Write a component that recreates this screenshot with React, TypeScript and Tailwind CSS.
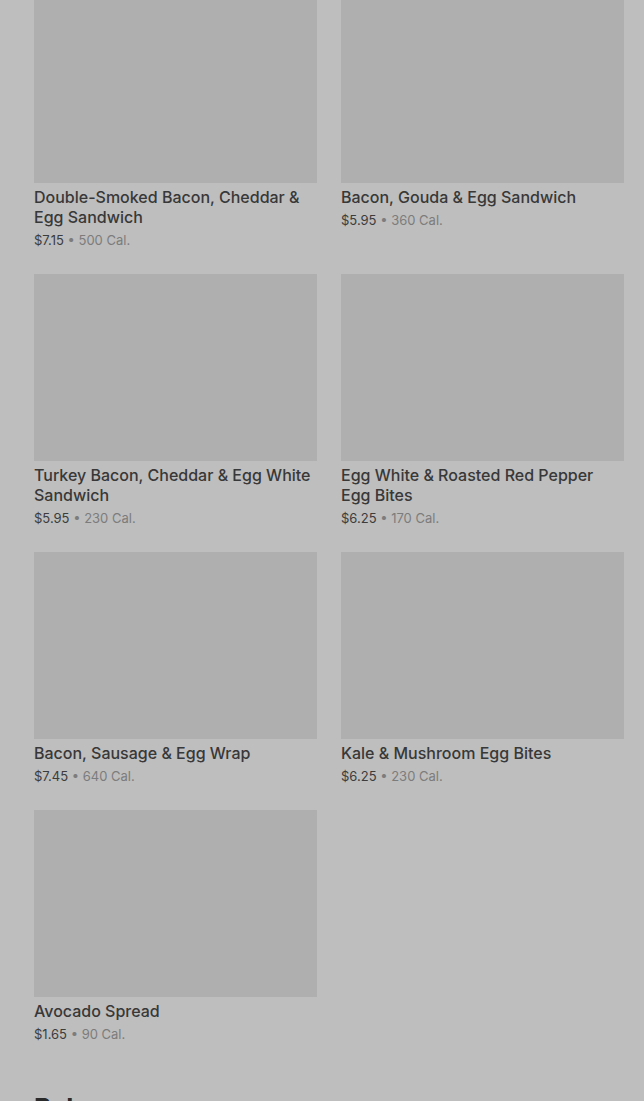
import React from "react";

interface MenuItem {
  name: string;
  price: string;
  cal: string;
}

const items: MenuItem[] = [
  { name: "Double-Smoked Bacon, Cheddar & Egg Sandwich", price: "$7.15", cal: "500 Cal." },
  { name: "Bacon, Gouda & Egg Sandwich", price: "$5.95", cal: "360 Cal." },
  { name: "Turkey Bacon, Cheddar & Egg White Sandwich", price: "$5.95", cal: "230 Cal." },
  { name: "Egg White & Roasted Red Pepper Egg Bites", price: "$6.25", cal: "170 Cal." },
  { name: "Bacon, Sausage & Egg Wrap", price: "$7.45", cal: "640 Cal." },
  { name: "Kale & Mushroom Egg Bites", price: "$6.25", cal: "230 Cal." },
  { name: "Avocado Spread", price: "$1.65", cal: "90 Cal." },
];

const ItemCard: React.FC<{ item: MenuItem }> = ({ item }) => (
  <div className="flex flex-col">
    <div className="h-[187px] w-full bg-[#afafaf]" />
    <p className="mt-1 text-[16px] leading-5 font-medium text-[#383838]">{item.name}</p>
    <p className="mt-[3px] text-[13px] leading-5 text-[#3c3c3c]">
      {item.price}
      <span className="text-[#7c7c7c]"> • {item.cal}</span>
    </p>
  </div>
);

export default function App() {
  return (
    <div
      className="h-[1101px] overflow-hidden bg-[#bebebe]"
      style={{ fontFamily: "Inter, 'Liberation Sans', sans-serif" }}
    >
      <div className="mt-[-4px] pl-[34px] pr-[20px]">
        <div className="grid grid-cols-2 gap-x-6 gap-y-6">
          {items.map((item) => (
            <ItemCard key={item.name} item={item} />
          ))}
        </div>
        <h2 className="mt-[48px] text-[26px] leading-8 font-bold text-[#2a2a2a]">Bakery</h2>
      </div>
    </div>
  );
}
